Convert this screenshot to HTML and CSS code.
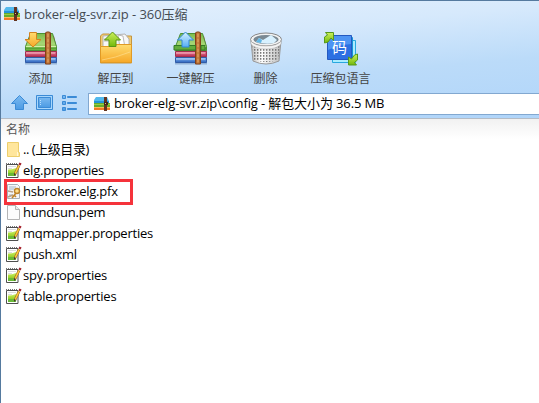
FILE: index.html
```
<!DOCTYPE html>
<html lang="zh-CN">
<head>
<meta charset="utf-8">
<title>broker-elg-svr.zip - 360压缩</title>
<link rel="stylesheet" href="styles.css">
</head>
<body>
<svg class="defs" width="0" height="0" aria-hidden="true">
  <defs>
    <linearGradient id="green" x2="0" y2="1"><stop stop-color="#7cba4c"/><stop offset=".6" stop-color="#a6d775"/><stop offset="1" stop-color="#7cc043"/></linearGradient>
    <linearGradient id="red" x2="0" y2="1"><stop stop-color="#e88098"/><stop offset="1" stop-color="#b82b52"/></linearGradient>
    <linearGradient id="blue" x2="0" y2="1"><stop stop-color="#8ebcf2"/><stop offset="1" stop-color="#2a62bd"/></linearGradient>
    <linearGradient id="wood"><stop stop-color="#a4561f"/><stop offset=".5" stop-color="#d18a48"/><stop offset="1" stop-color="#9a4f1d"/></linearGradient>
    <linearGradient id="gold" x2="0" y2="1"><stop stop-color="#ffdc70"/><stop offset="1" stop-color="#f6a828"/></linearGradient>
    <linearGradient id="lime" x2="0" y2="1"><stop stop-color="#cdf05c"/><stop offset="1" stop-color="#72b90c"/></linearGradient>
    <linearGradient id="sky" x2="0" y2="1"><stop stop-color="#d8f2ff"/><stop offset="1" stop-color="#55aef5"/></linearGradient>
    <linearGradient id="nav" x2="0" y2="1"><stop stop-color="#7ab9f0"/><stop offset="1" stop-color="#4c9be4"/></linearGradient>
    <linearGradient id="metal"><stop stop-color="#bbb"/><stop offset=".35" stop-color="#fff"/><stop offset="1" stop-color="#bbb"/></linearGradient>
    <pattern id="mesh" width="3" height="3" patternUnits="userSpaceOnUse"><path d="M0 0h1.400v1.800H0z" fill="#777"/></pattern>
    <symbol id="books" viewBox="0 0 36 36">
      <path d="M2 32.500h32" stroke="#436ca0" stroke-opacity=".4" stroke-width="2"/>
      <path d="M31 5l3 13v9h-3z" fill="#d24c5e"/>
      <path d="M2.500 26.500h31v5h-31z" fill="url(#blue)" stroke="#315ca8"/>
      <path d="M3 28h29" stroke="#b7d4fa"/>
      <path d="M2.500 20.500h31v5h-31z" fill="url(#red)" stroke="#a23050"/>
      <path d="M3 22h29" stroke="#f7b6c5"/>
      <path d="M7.500 2.500h22l4 13v4h-31v-4z" fill="url(#green)" stroke="#4b9034"/>
      <path d="M3 15.500h30" stroke="#d3efab"/><path d="M3 17.500h30" stroke="#58a438" stroke-width="2"/>
      <path d="M22.500 2l1-1h3l1 1v31h-5z" fill="url(#wood)" stroke="#814019"/>
      <path d="M25 3v28" stroke="#e4a464" stroke-dasharray="3 2"/>
    </symbol>
    <symbol id="zip" viewBox="0 0 16 14">
      <path d="M2 0h11l2 4v3H0V3z" fill="#53b9ed"/><path d="M0 4h15v2H0z" fill="#2495d8"/>
      <path d="M0 6h16v4H0z" fill="#65ad2b"/><path d="M0 7h16v1H0z" fill="#9bcc45"/>
      <path d="M0 10h16v3H0z" fill="#f27b26"/><path d="M0 10h16v1H0z" fill="#ffbd59"/>
      <path d="M10 0h3v14h-3z" fill="#633420"/><path d="M10 5h4v3h-4z" fill="#422618"/><path d="M11 6h1v1h-1z" fill="#e6bd84"/>
    </symbol>
    <symbol id="note" viewBox="0 0 17 17">
      <path d="M1.500 2.500h11.500v13H1.500z" fill="#fff" stroke="#4f4f4f"/>
      <path d="M3 7.500q4 0 8-1.500v8H3z" fill="url(#lime)"/><path d="M3 11h8v3H3z" fill="#69b936"/>
      <path d="M1 1.500h12" stroke="#777" stroke-dasharray="1 1"/>
      <path d="M3 4.500h8M3 6.500h4" stroke="#ddd"/>
      <path d="M14 3.500L10 12" stroke="#8b5a1e" stroke-width="2.600"/><path d="M14 3.500L10 12" stroke="#ffc737" stroke-width="1.700"/>
      <path d="M15.500 1l-1 2" stroke="#a51f2a" stroke-width="2.400"/><path d="M9 11v3l2-2z" fill="#433"/>
    </symbol>
  </defs>
</svg>
<div class="window">
  <header class="chrome">
    <div class="title"><svg class="zip-icon"><use href="#zip"/></svg><span>broker-elg-svr.zip - 360压缩</span></div>
    <nav class="tools">
      <div class="tool"><svg viewBox="0 0 36 36"><use href="#books"/><path d="M6.500 1.500h7v7h4.500L10 16 2 8.500h4.500z" fill="url(#gold)" stroke="#d28420"/></svg><span>添加</span></div>
      <div class="tool"><svg viewBox="0 0 36 36">
        <path d="M2.500 32V5l2-2h7l2 2h20v27z" fill="#f3cb6f" stroke="#c39540"/>
        <path d="M5 5l22-2 4 5v10H5z" fill="#f7f7f7" stroke="#b4b4b4"/><path d="M20 4l5 1 2 12h-5zM6 8h5M6 10h5" fill="#fff" stroke="#bbb"/>
        <path d="M2.500 15.500h11l3-2h17v18h-31z" fill="url(#gold)" stroke="#e09a25"/><path d="M4 29q13-2 28-8" fill="none" stroke="#ffe397" stroke-opacity=".6"/>
        <path d="M14.500 1l8 8H18v6.500h-7V9H6.500z" fill="url(#lime)" stroke="#589413"/></svg><span>解压到</span></div>
      <div class="tool"><svg viewBox="0 0 36 36"><use href="#books"/>
        <path d="M1 14.500h21.500v4.500H1zM28 14.500h4v4.500h-4z" fill="#62ad3c" stroke="#347b25"/>
        <path d="M12.500 1l8 8H16v7H9V9H4.500z" fill="url(#sky)" stroke="#3288d8"/></svg><span>一键解压</span></div>
      <div class="tool"><svg viewBox="0 0 36 36">
        <path d="M3 10h30l-2 20q-13 6-26 0z" fill="url(#metal)" stroke="#999"/><path d="M4 15h28l-2 14q-12 4-24 0z" fill="url(#mesh)"/>
        <ellipse cx="18" cy="8.500" rx="15.500" ry="6.500" fill="#f2f2f2" stroke="#888"/><ellipse cx="18" cy="8.500" rx="12.500" ry="4.500" fill="#7a8993"/>
        <path d="M8 11l3-4 4 2 8-5 6 5-3 3q-8 2-18-1z" fill="#d8f1ff"/><path d="M8 11l3-4 3 2-1 3z" fill="#62b7e5"/>
        <path d="M3 10q3 5 15 5t15-5v3q-4 5-15 5T3 13z" fill="#f4f4f4" stroke="#aaa" stroke-width=".5"/></svg><span>删除</span></div>
      <div class="tool"><svg viewBox="0 0 36 36">
        <path d="M9.500 9.500h23v22h-23z" fill="#a9ecff" stroke="#29a8df"/><path d="M6.500 6.500h23v22h-23z" fill="#5cc6f6" stroke="#1595d9"/>
        <path d="M4.500 4.500h24v24h-24z" fill="#2d70e2" stroke="#2459c0"/><path d="M5 5h23v8Q15 14 5 19z" fill="#4e94f3"/>
        <text x="16.500" y="21.500" text-anchor="middle" class="code">码</text>
        <path d="M1.500 12V6l3-2-2-2.500h8v8L8 7l-3 4z" fill="url(#lime)" stroke="#58991a"/>
        <path d="M34.500 23v6l-3 2.500 2 2.500h-8v-8l3 2 3-4z" fill="url(#lime)" stroke="#58991a"/></svg><span>压缩包语言</span></div>
    </nav>
    <div class="location">
      <svg class="nav-icons" viewBox="0 0 67 18" fill="url(#nav)" stroke="#3b8bd6">
        <path d="M8.500 1.500l8 8h-4v6h-8v-6h-4z"/>
        <path d="M25.500 1.500h16v14h-16z" fill="#a7d6fc"/><path d="M27.500 3.500h12v10h-12z"/><path d="M29.500 6v6" fill="none" stroke="#b9e0ff" stroke-dasharray="1 1"/>
        <path d="M51.500 1.500h3v3h-3zM51.500 7.500h3v3h-3zM51.500 13.500h3v3h-3z"/><path d="M56.500 2.500h9v1h-9zM56.500 8.500h9v1h-9zM56.500 14.500h9v1h-9z"/>
      </svg>
      <div class="address"><svg class="zip-icon"><use href="#zip"/></svg><span>broker-elg-svr.zip\config - 解包大小为 36.5 MB</span></div>
    </div>
  </header>
  <main>
    <div class="column">名称</div>
    <ul class="files">
      <li><svg viewBox="0 0 17 17"><path d="M2.500 1.500h11v10h1v4h-12z" fill="#ffe69c" stroke="#edce6c"/><path d="M12.500 11v4" stroke="#fff8d6"/></svg><span class="parent">.. (上级目录)</span></li>
      <li><svg><use href="#note"/></svg><span>elg.properties</span></li>
      <li class="marked"><svg viewBox="0 0 17 17"><path d="M2.500 1.500h10l2 2v12h-12z" fill="#f5f7fa" stroke="#aab0b7"/><path d="M4 4h7M4 6h5M4 12h4" stroke="#a5b5c5"/><path d="M3 8l5 1M3 14l5-2" stroke="#b9a084" stroke-width="1.500"/><circle cx="12" cy="8" r="2.500" fill="#ffe08a" stroke="#bd832b" stroke-width="1.400"/><path d="M11 10l-4 5M9 12l2 2" stroke="#c28428" stroke-width="1.600"/></svg><span>hsbroker.elg.pfx</span></li>
      <li><svg viewBox="0 0 17 17"><path d="M2.500 1.500h8l4 4v10h-12z" fill="#fcfcfc" stroke="#b5b5b5"/><path d="M10.500 1.500v4h4" fill="#eee" stroke="#b5b5b5"/></svg><span>hundsun.pem</span></li>
      <li><svg><use href="#note"/></svg><span>mqmapper.properties</span></li>
      <li><svg><use href="#note"/></svg><span>push.xml</span></li>
      <li><svg><use href="#note"/></svg><span>spy.properties</span></li>
      <li><svg><use href="#note"/></svg><span>table.properties</span></li>
    </ul>
  </main>
</div>
</body>
</html>
```
FILE: styles.css
```
* { box-sizing: border-box; }
body { margin: 0; font: 13px/21px "Open Sans", "Noto Sans CJK SC", sans-serif; color: #000; overflow: hidden; }
.defs { position: absolute; }
svg { display: block; flex: none; }
span { white-space: nowrap; }
.window { width: 539px; height: 403px; border: solid #557a9f; border-width: 1px 0 0 1px; background: #fff; display: flex; flex-direction: column; }
.chrome { height: 118px; flex: none; border-bottom: 1px solid #b4bcc6; background: linear-gradient(175deg, #e5f1fd 0, #d6e9fc 32%, #bbdbf9 63%, #b0d5fa 100%); }
.title { height: 26px; display: flex; align-items: center; padding-left: 3px; gap: 4px; color: #444b53; letter-spacing: -.04px; }
.zip-icon { width: 16px; height: 14px; }
.tools { display: flex; height: 64px; padding-left: 2px; color: #444; }
.tool { width: 75px; display: flex; flex-direction: column; align-items: center; padding-top: 4px; font-size: 12px; line-height: 22px; }
.tool svg { width: 36px; height: 36px; }
.tool span { margin-top: 1px; }
.code { font: 15px "Noto Sans CJK SC", sans-serif; fill: #fff; }
.location { display: flex; align-items: center; height: 24px; padding-left: 10px; gap: 10px; }
.nav-icons { width: 67px; height: 18px; }
.address { flex: 1; display: flex; align-items: center; gap: 4px; height: 22px; margin-top: 1px; padding-left: 5px; border: 1px solid #82a8d0; border-right: 0; background: #fff; letter-spacing: -.12px; }
main { flex: 1; background: linear-gradient(#f1f1f1, #fff 20px); }
.column { height: 20px; padding-left: 5px; font-size: 12px; line-height: 21px; color: #555; }
.files { list-style: none; margin: 0; padding: 0 0 0 4px; }
.files li { position: relative; display: flex; align-items: center; height: 21px; gap: 1px; letter-spacing: -.22px; }
.files .parent { letter-spacing: -.45px; }
.files svg { width: 17px; height: 17px; }
.marked::after { content: ""; position: absolute; left: -1px; top: -2px; width: 129px; height: 26px; box-sizing: border-box; border: 3px solid #f5333b; }
```
